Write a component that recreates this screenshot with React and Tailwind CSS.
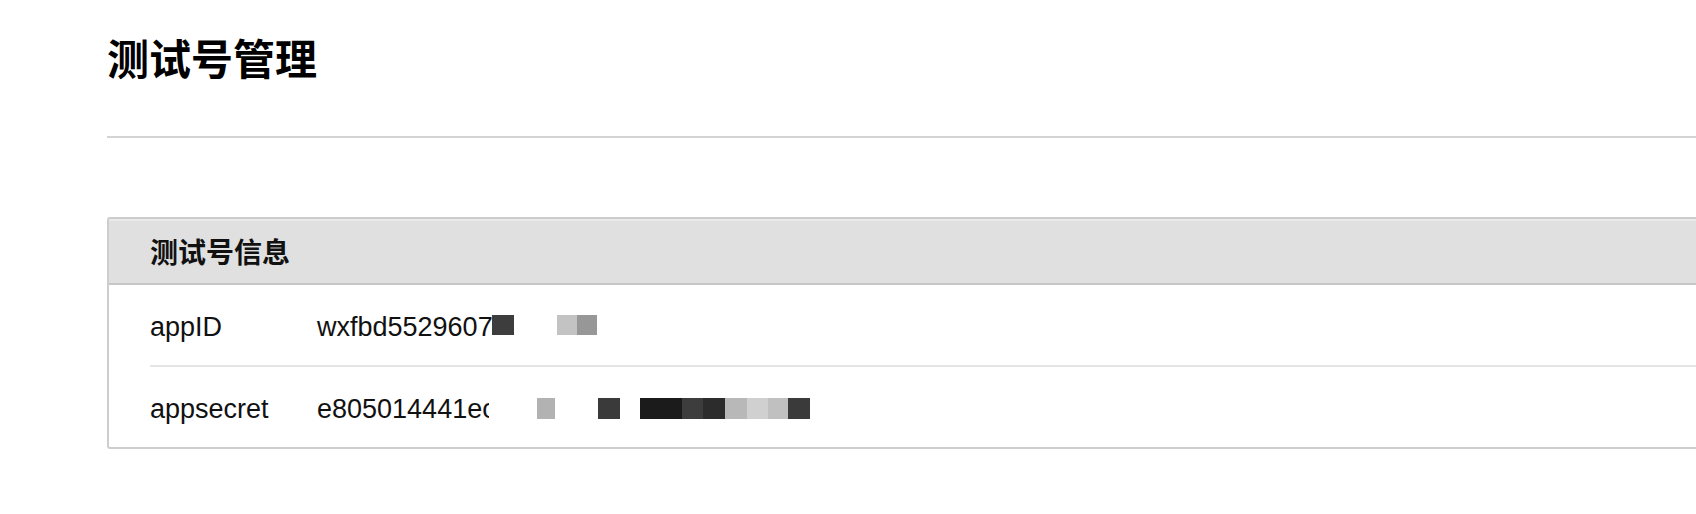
import React from 'react';

const latin = { fontFamily: '"Liberation Sans", "Noto Sans CJK SC", sans-serif' };
const cjk = { fontFamily: '"Noto Sans CJK SC", "Liberation Sans", sans-serif' };

// mosaic redaction squares, x offsets relative to value start
const appIdMask = [
  { left: 175, width: 22, color: '#3d3d3d' },
  { left: 240, width: 20, color: '#c3c3c3' },
  { left: 260, width: 20, color: '#979797' },
];

const secretMask = [
  { left: 172, width: 48, color: '#ffffff' },
  { left: 220, width: 18, color: '#b2b2b2' },
  { left: 281, width: 22, color: '#3a3a3a' },
  { left: 323, width: 42, color: '#1b1b1b' },
  { left: 365, width: 21, color: '#3d3d3d' },
  { left: 386, width: 22, color: '#2c2c2c' },
  { left: 408, width: 22, color: '#b8b8b8' },
  { left: 430, width: 21, color: '#d0d0d0' },
  { left: 451, width: 20, color: '#c0c0c0' },
  { left: 471, width: 22, color: '#3a3a3a' },
];

function InfoRow({ label, value, mask, top, h }) {
  return (
    <div className="flex items-center h-[80px] pt-1 text-[27px] text-[#111]" style={latin}>
      <div className="w-[167px] shrink-0">{label}</div>
      <div className="relative">
        <span>{value}</span>
        {mask.map((m, i) => (
          <span
            key={i}
            className="absolute"
            style={{ left: m.left, width: m.width, top, height: h, background: m.color }}
          />
        ))}
      </div>
    </div>
  );
}

export default function App() {
  return (
    <div className="w-full h-[514px] bg-white overflow-hidden">
      <div className="w-[1760px] pl-[107px]">
        {/* Page title */}
        <h1 className="mt-[36px] text-[42px] leading-[42px] font-bold text-black" style={cjk}>
          测试号管理
        </h1>
        <div className="mt-[58px] border-t-2 border-[#d4d4d4]" />

        {/* Test account panel */}
        <div className="mt-[79px] border-2 border-[#cdcdcd] rounded-[3px] bg-white">
          <div className="h-[66px] flex items-center pl-[41px] bg-[#e0e0e0] border-b-2 border-[#c6c6c6] shadow-[inset_0_2px_0_#e9e9e9]">
            <span className="text-[28px] font-bold text-[#111]" style={cjk}>测试号信息</span>
          </div>
          <div className="pl-[41px]">
            <InfoRow label="appID" value="wxfbd5529607" mask={appIdMask} top={8} h={20} />
            <div className="border-t-2 border-[#e5e5e5]" />
            <InfoRow label="appsecret" value="e805014441ec" mask={secretMask} top={9} h={21} />
          </div>
        </div>
      </div>
    </div>
  );
}
